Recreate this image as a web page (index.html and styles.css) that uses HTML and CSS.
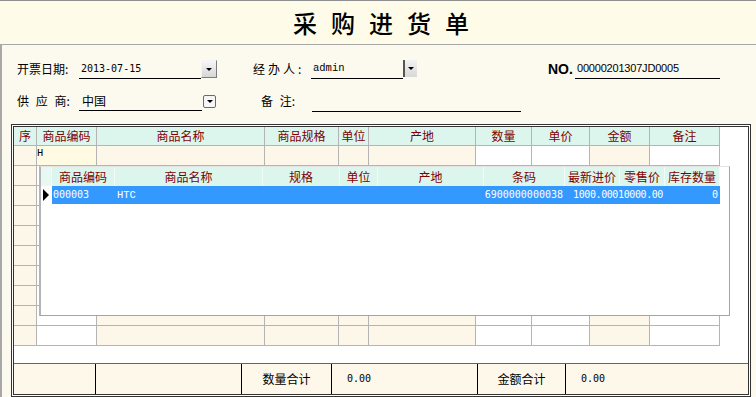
FILE: index.html
```html
<!DOCTYPE html>
<html>
<head>
  <title>采购进货单</title>
  <link rel="stylesheet" href="styles.css">
</head>
<body>
  <div class="title"><h1>采购进货单</h1></div>

  <div class="main">
    <div class="form">
      <div class="form-row">
        <label class="lbl lbl-date">开票日期:</label>
        <div class="field f-date mono">2013-07-15</div>
        <span class="drop drop-3d"></span>
        <label class="lbl lbl-agent">经办人:</label>
        <div class="field f-agent courier">admin</div>
        <span class="drop drop-flat"></span>
        <span class="no">NO.</span>
        <div class="field f-no">00000201307JD0005</div>
      </div>
      <div class="form-row row2">
        <label class="lbl lbl-date spaced">供 应 商:</label>
        <div class="field f-supplier">中国</div>
        <span class="drop drop-round"></span>
        <label class="lbl lbl-note spaced">备 注:</label>
        <div class="field f-note"></div>
      </div>
    </div>

    <div class="frame">
      <div class="grid">
        <div class="grid-head">
          <span>序</span><span>商品编码</span><span>商品名称</span><span>商品规格</span><span>单位</span>
          <span>产地</span><span>数量</span><span>单价</span><span>金额</span><span>备注</span>
        </div>
        <div class="grid-row">
          <span></span><span class="editing courier">H</span><span></span><span></span><span></span>
          <span></span><span></span><span></span><span></span><span></span>
        </div>
        <div class="grid-row"><span></span><span></span><span></span><span></span><span></span><span></span><span></span><span></span><span></span><span></span></div>
        <div class="grid-row"><span></span><span></span><span></span><span></span><span></span><span></span><span></span><span></span><span></span><span></span></div>
        <div class="grid-row"><span></span><span></span><span></span><span></span><span></span><span></span><span></span><span></span><span></span><span></span></div>
        <div class="grid-row"><span></span><span></span><span></span><span></span><span></span><span></span><span></span><span></span><span></span><span></span></div>
        <div class="grid-row"><span></span><span></span><span></span><span></span><span></span><span></span><span></span><span></span><span></span><span></span></div>
        <div class="grid-row"><span></span><span></span><span></span><span></span><span></span><span></span><span></span><span></span><span></span><span></span></div>
        <div class="grid-row"><span></span><span></span><span></span><span></span><span></span><span></span><span></span><span></span><span></span><span></span></div>
        <div class="grid-row"><span></span><span></span><span></span><span></span><span></span><span></span><span></span><span></span><span></span><span></span></div>
        <div class="grid-row"><span></span><span></span><span></span><span></span><span></span><span></span><span></span><span></span><span></span><span></span></div>
      </div>

      <!-- goods lookup dropdown -->
      <div class="popup">
        <div class="pop-head">
          <span></span><span>商品编码</span><span>商品名称</span><span>规格</span><span>单位</span>
          <span>产地</span><span>条码</span><span>最新进价</span><span>零售价</span><span>库存数量</span>
        </div>
        <div class="pop-row selected">
          <span class="pointer"><i></i></span>
          <span class="mono">000003</span>
          <span class="courier">HTC</span>
          <span></span><span></span><span></span>
          <span class="num">6900000000038</span>
          <span class="num tight">1000.000</span>
          <span class="num tight">10000.00</span>
          <span class="num">0</span>
        </div>
      </div>

      <div class="footer">
        <span></span>
        <span></span>
        <span class="sum-label">数量合计</span>
        <span class="sum-value mono">0.00</span>
        <span class="sum-label">金额合计</span>
        <span class="sum-value mono">0.00</span>
      </div>
    </div>
  </div>
</body>
</html>
```

FILE: styles.css
```css
body {
  margin: 0;
  background-color: #fcf9ee;
  font-family: "Noto Sans CJK SC", sans-serif;
  font-size: 12px;
  color: #000;
}

.mono {
  font-family: "DejaVu Sans Mono", monospace;
  font-size: 10px;
}

.courier {
  font-family: "Liberation Mono", monospace;
  font-size: 10.5px;
}

.title {
  height: 43px;
  border-top: 1px solid #909090;
  border-bottom: 1px solid #a8a8a8;
  background-color: #fefce9;
}

.title h1 {
  margin: 0;
  padding-left: 20px;
  font-size: 24px;
  font-weight: 500;
  line-height: 43px;
  letter-spacing: 14px;
  text-align: center;
}

.main {
  height: 353px;
  border-left: 2px solid #a8a8a8;
}

/* header fields */
.form {
  padding: 14px 0 0 15px;
}

.form-row {
  display: flex;
  align-items: flex-start;
  height: 20px;
}

.row2 {
  margin-top: 12px;
}

.lbl {
  width: 62px;
  line-height: 20px;
}

.spaced {
  word-spacing: 4px;
}

.lbl-agent {
  width: 58px;
  margin-left: 36px;
  letter-spacing: 3px;
}

.lbl-note {
  width: 51px;
  margin-left: 45px;
}

.field {
  box-sizing: border-box;
  height: 20px;
  padding-left: 2px;
  border-bottom: 1px solid #000;
  line-height: 19px;
}

.f-date { width: 122px; }
.f-agent { width: 92px; }
.f-supplier { width: 123px; padding-left: 3px; }
.f-note { width: 209px; height: 21px; }

.f-no {
  width: 145px;
  font-family: "Liberation Sans", sans-serif;
  font-size: 11px;
  letter-spacing: -0.2px;
}

.no {
  width: 27px;
  margin-left: 131px;
  font-family: "Liberation Sans", sans-serif;
  font-size: 14px;
  font-weight: bold;
  line-height: 21px;
}

.drop {
  box-sizing: border-box;
  display: flex;
  align-items: center;
  justify-content: center;
}

.drop::after {
  content: "";
  border-left: 3px solid transparent;
  border-right: 3px solid transparent;
  border-top: 3px solid #000;
}

.drop-3d {
  width: 16px;
  height: 18px;
  margin-top: 1px;
  border: 1px solid;
  border-color: #f4f4f4 #7c7c7c #7c7c7c #f4f4f4;
  background: linear-gradient(#f6f6f6, #d6d6d6);
}

.drop-flat {
  width: 14px;
  height: 17px;
  margin-top: 1px;
  border-left: 2px solid #555;
  background: linear-gradient(#f2f2f2, #d8d8d8);
}

.drop-round {
  width: 13px;
  height: 13px;
  margin: 4px 0 0 1px;
  border: 1px solid #6a6a6a;
  border-radius: 2px;
  background: #f6f6f6;
}

/* main grid */
.frame {
  position: relative;
  box-sizing: border-box;
  display: flex;
  flex-direction: column;
  width: 740px;
  height: 273px;
  margin: 13px 0 0 9px;
  border: 3px double #333;
  background-color: #fff;
}

.grid-head,
.grid-row {
  display: grid;
  grid-template-columns: 23px 60px 168px 74px 30px 107px 56px 58px 60px 70px;
}

.grid-head span,
.grid-row span {
  box-sizing: border-box;
  border-right: 1px solid #b4b4b4;
  border-bottom: 1px solid #b4b4b4;
}

.grid-head span {
  height: 19px;
  background-color: #dcf6ee;
  color: #800000;
  line-height: 18px;
  text-align: center;
}

.grid-row span {
  height: 20px;
  background-color: #fcf7e9;
}

.grid-row span:nth-child(2),
.grid-row span:nth-child(7),
.grid-row span:nth-child(8),
.grid-row span:nth-child(10) {
  background-color: #fff;
}

.grid-row span.editing {
  background-color: #fffbe2;
  line-height: 14px;
}

.popup {
  position: absolute;
  left: 25px;
  top: 39px;
  box-sizing: border-box;
  width: 691px;
  height: 150px;
  border: 1px solid #a4a4a4;
  border-left: 2px solid #b4b4b4;
  border-top-color: #e4e4e4;
  background-color: #fff;
}

.pop-head,
.pop-row {
  display: grid;
  grid-template-columns: 11px 63px 148px 77px 38px 106px 81px 55px 45px 55px;
}

.pop-head span {
  height: 19px;
  border-right: 1px solid #f2fbf8;
  background-color: #dcf6ee;
  color: #800000;
  line-height: 19px;
  text-align: center;
  white-space: nowrap;
}

.pop-head span:first-child {
  background-color: #e8f8f3;
}

.pop-row span {
  height: 18px;
  line-height: 18px;
  background-color: #3399ff;
  color: #fff;
  white-space: nowrap;
}

.pop-row .mono {
  padding-left: 1px;
}

.pop-row .courier {
  padding-left: 2px;
}

.pop-row span.pointer {
  display: flex;
  align-items: center;
  padding-left: 2px;
  background-color: #fff;
}

.pointer i {
  border-left: 6px solid #000;
  border-top: 6px solid transparent;
  border-bottom: 6px solid transparent;
}

.num {
  padding-right: 2px;
  font-family: "DejaVu Sans Mono", monospace;
  font-size: 10px;
  text-align: right;
  direction: rtl;
}

.num.tight {
  letter-spacing: -0.4px;
}

/* totals */
.footer {
  display: grid;
  grid-template-columns: 82px 146px 90px 146px 88px 1fr;
  height: 30px;
  margin-top: auto;
  border-top: 1px solid #666;
  background-color: #fdf8ea;
}

.footer span {
  border-right: 1px solid #000;
  line-height: 29px;
}

.footer span:last-child {
  border-right: none;
}

.sum-label {
  text-align: center;
}

.sum-value {
  padding-left: 15px;
}
```
